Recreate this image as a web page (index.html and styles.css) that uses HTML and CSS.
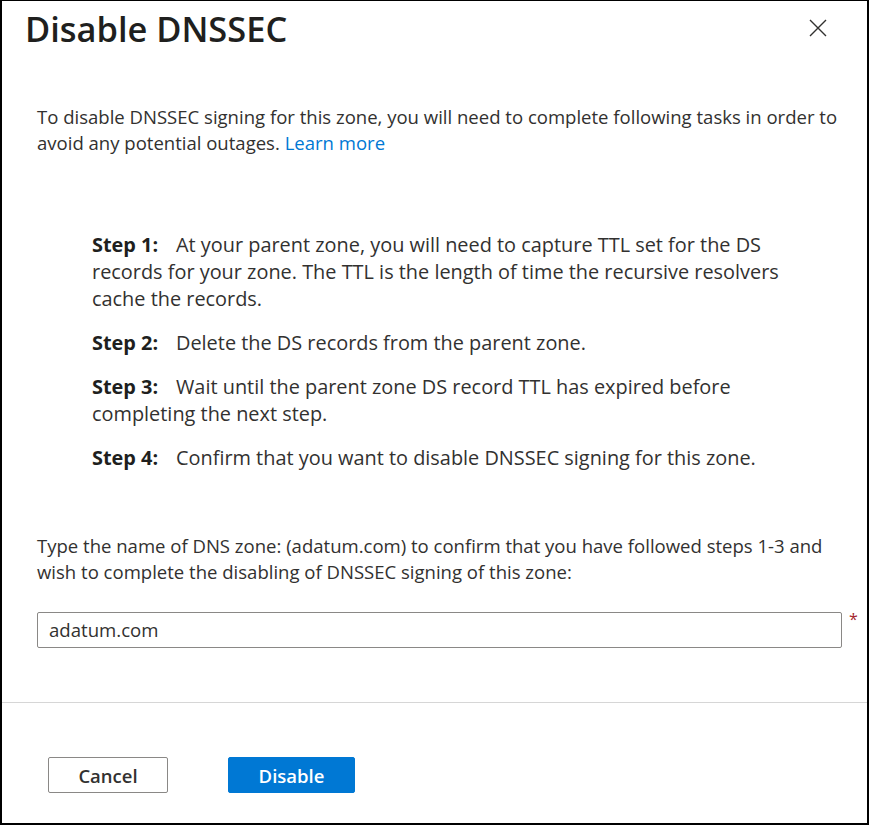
FILE: index.html
```html
<!DOCTYPE html>
<html lang="en">
<head>
<meta charset="utf-8">
<title>Disable DNSSEC</title>
<link rel="stylesheet" href="styles.css">
</head>
<body>
<div class="panel">
  <header class="head">
    <h1 class="title">Disable DNSSEC</h1>
    <button class="close" aria-label="Close">
      <svg width="18" height="18" viewBox="0 0 18 18"><path d="M1 1 L17 17 M17 1 L1 17" stroke="#323130" stroke-width="1.4" fill="none"/></svg>
    </button>
  </header>
  <div class="body">
    <p class="intro">To disable DNSSEC signing for this zone, you will need to complete following tasks in order to avoid any potential outages. <a class="link" href="#">Learn more</a></p>
    <ol class="steps">
      <li class="step"><b class="label">Step 1:</b>At your parent zone, you will need to capture TTL set for the DS records for your zone. The TTL is the length of time the recursive resolvers cache the records.</li>
      <li class="step"><b class="label">Step 2:</b>Delete the DS records from the parent zone.</li>
      <li class="step"><b class="label">Step 3:</b>Wait until the parent zone DS record TTL has expired before completing the next step.</li>
      <li class="step"><b class="label">Step 4:</b>Confirm that you want to disable DNSSEC signing for this zone.</li>
    </ol>
    <p class="confirm">Type the name of DNS zone: (adatum.com) to confirm that you have followed steps 1-3 and wish to complete the disabling of DNSSEC signing of this zone:</p>
    <div class="field">
      <input class="input" type="text" value="adatum.com">
      <span class="req">*</span>
    </div>
  </div>
  <footer class="foot">
    <button class="btn btn-cancel">Cancel</button>
    <button class="btn btn-primary">Disable</button>
  </footer>
</div>
</body>
</html>
```
FILE: styles.css
```css
html, body { margin: 0; padding: 0; background: #fff; }
body { font-family: "Open Sans", "Noto Sans", sans-serif; color: #323130; }
.panel {
  width: 869px; height: 825px; box-sizing: border-box;
  border: 2px solid #000; border-top-width: 1px;
  display: flex; flex-direction: column;
}
.head { display: flex; justify-content: space-between; align-items: flex-start; padding: 0 0 0 23px; height: 50px; }
.title { margin: 6px 0 0; font-size: 34.4px; font-weight: 600; color: #201f1e; line-height: 44px; }
.close { border: 0; background: none; padding: 0; margin: 18px 40px 0 0; width: 18px; height: 18px; cursor: pointer; }
.close svg { display: block; }
.body { padding: 0 26px 0 35px; flex: 1; }
.intro { margin: 53px 0 0; font-size: 18.55px; line-height: 26px; }
.link { color: #0078d4; text-decoration: none; }
.steps { list-style: none; margin: 75px 0 0; padding: 0 41px 0 55px; }
.step { font-size: 19.9px; line-height: 27.2px; margin: 0 0 16.5px; }
.step:last-child { margin-bottom: 0; }
.label { display: inline-block; width: 84px; font-weight: 700; color: #201f1e; }
.confirm { margin: 62px 0 0; font-size: 18.55px; line-height: 26px; }
.field { display: flex; align-items: flex-start; margin-top: 27px; }
.input {
  flex: none; width: 805px; height: 36px; box-sizing: border-box; border: 1px solid #8a8886; border-radius: 2px;
  font: 18.6px "Open Sans", sans-serif; color: #323130; padding: 0 11px; outline: none;
}
.req { color: #a4262c; font-size: 16px; margin: 0 0 0 7px; line-height: 14px; }
.foot { border-top: 1px solid #d6d6d6; height: 121px; flex: none; box-sizing: border-box; display: flex; align-items: flex-start; gap: 60px; padding: 54px 0 0 46px; }
.btn { height: 36px; box-sizing: border-box; border-radius: 2px; font: 600 18.5px "Open Sans", sans-serif; cursor: pointer; padding: 0; }
.btn-cancel { width: 120px; background: #fff; border: 1px solid #8a8886; color: #323130; }
.btn-primary { width: 127px; background: #0078d4; border: 1px solid #0078d4; color: #fff; }
```
